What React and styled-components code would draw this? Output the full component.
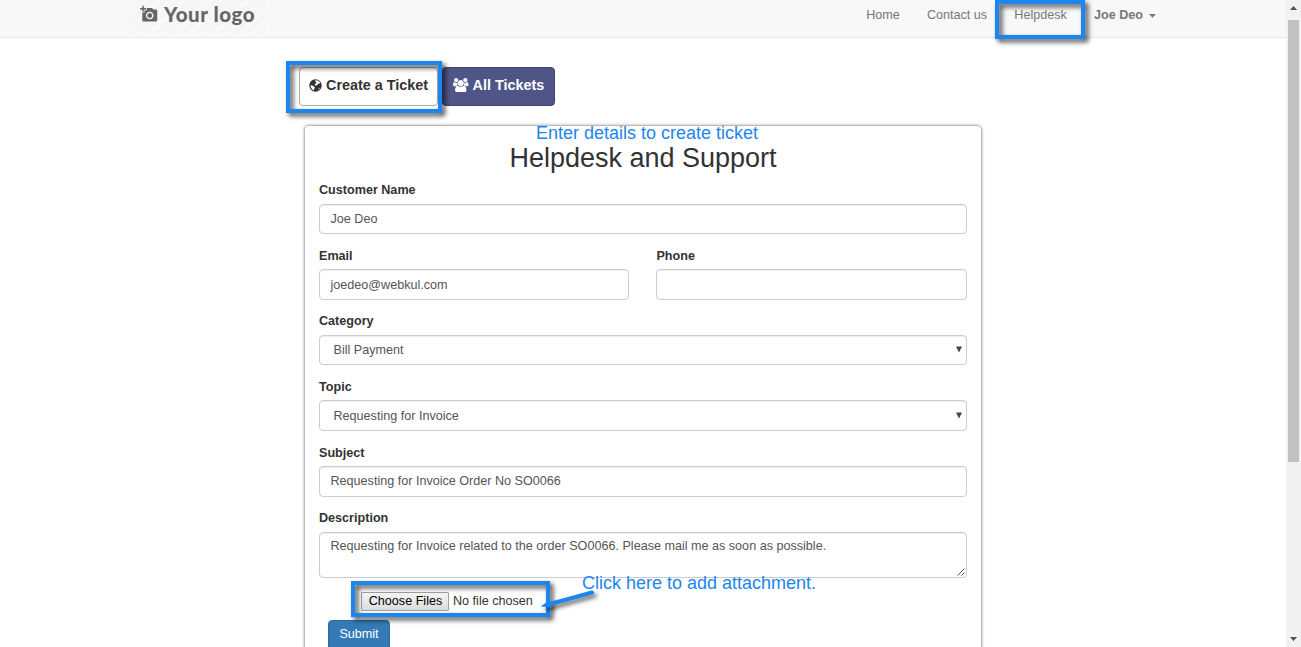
import React from 'react';
import styled, { createGlobalStyle } from 'styled-components';
import { MdAddAPhoto } from 'react-icons/md';

const GlobalStyle = createGlobalStyle`
  * { box-sizing: border-box; }
  html, body { margin: 0; padding: 0; overflow: hidden; }
  body {
    font-family: "Liberation Sans", Arial, sans-serif;
    font-size: 12.6px;
    line-height: 18px;
    color: #333;
    background: #fff;
  }
`;

const BLUE = '#1c86ee';

const Window = styled.div`
  position: relative;
  display: flex;
  width: 1301px;
  height: 647px;
  overflow: hidden;
`;

const Page = styled.div`
  flex: 1;
  min-width: 0;
  display: flex;
  flex-direction: column;
  overflow: hidden;
`;

const Navbar = styled.header`
  flex: none;
  height: 38px;
  padding: 0 130px;
  display: flex;
  justify-content: space-between;
  align-items: flex-start;
  background: #f8f8f8;
  border-bottom: 1px solid #e7e7e7;
`;

const Brand = styled.a`
  display: flex;
  align-items: center;
  gap: 6.5px;
  width: 135px;
  height: 33px;
  padding: 0 0 5px 9.5px;
  color: #666;
  background: repeating-linear-gradient(135deg, #f8f8f8 0 5px, #f5f5f5 5px 9px);
`;

const BrandName = styled.span`
  font-family: Lato, sans-serif;
  font-size: 20.5px;
  font-weight: 900;
  letter-spacing: 0.55px;
  white-space: nowrap;
`;

const NavLinks = styled.nav`
  display: flex;
  gap: 27.2px;
  padding-top: 6px;
`;

const NavLink = styled.a`
  display: flex;
  align-items: center;
  color: #777;
  font-weight: ${(p) => (p.$bold ? 700 : 400)};
  white-space: nowrap;
`;

const Caret = styled.svg`
  width: 7px;
  height: 4px;
  margin-left: 6px;
  margin-top: 1px;
  fill: #777;
`;

const Main = styled.main`
  width: 678px;
  margin-left: 304px;
  display: flex;
  flex-direction: column;
`;

const Tabs = styled.div`
  display: flex;
  gap: 4px;
  margin: 29px 0 19px -5px;
`;

const Tab = styled.button`
  display: flex;
  align-items: center;
  gap: 4px;
  width: ${(p) => p.$width}px;
  height: 39px;
  padding: 0 0 3px ${(p) => (p.$dark ? 10 : 9)}px;
  border: 1px solid ${(p) => (p.$dark ? '#3f4475' : '#aaa')};
  border-radius: 4px;
  background: ${(p) => (p.$dark ? '#505587' : '#fff')};
  color: ${(p) => (p.$dark ? '#fff' : '#333')};
  font: 700 14.4px/20px "Liberation Sans", Arial, sans-serif;
  white-space: nowrap;
`;

const Card = styled.section`
  height: 560px;
  padding: 17px 14px 0;
  border: 1px solid #bbb;
  border-radius: 5px;
  box-shadow: 0 0 3px rgba(0, 0, 0, 0.35);
`;

const Title = styled.h1`
  margin: 0 0 9.15px;
  font-size: 27px;
  font-weight: 400;
  line-height: 30px;
  text-align: center;
`;

const FormRow = styled.div`
  display: grid;
  grid-template-columns: 310px 310.6px;
  justify-content: space-between;
`;

const Group = styled.div`
  height: 65.6px;
`;

const Label = styled.label`
  display: block;
  height: 17px;
  margin-bottom: 4.5px;
  font-weight: 700;
  line-height: 17px;
`;

const Control = styled.div`
  display: flex;
  justify-content: space-between;
  align-items: flex-start;
  height: ${(p) => (p.$tall ? 46 : 30.6)}px;
  padding: 5.3px ${(p) => (p.$select ? '3px 0 13.5px' : '10px 0 10.5px')};
  border: 1px solid #ccc;
  border-radius: 4px;
  background: #fff;
  box-shadow: inset 0 1px 1px rgba(0, 0, 0, 0.075);
  color: #555;
  ${(p) => p.$tall && 'padding: 4.2px 0 0 10.5px;'}
`;

const SelectArrow = styled.svg`
  flex: none;
  width: 8px;
  height: 7px;
  margin-top: 5px;
`;

const ResizeGrip = styled.svg`
  align-self: flex-end;
  width: 9px;
  height: 9px;
`;

const Attachment = styled.div`
  display: flex;
  align-items: center;
  gap: 4px;
  margin: 16.25px 0 9px 42px;
  height: 19px;
`;

const FileButton = styled.button`
  width: 88px;
  height: 19px;
  padding: 0 0 0 1px;
  border: 1px solid #a0a0a0;
  border-radius: 1px;
  background: linear-gradient(#f4f4f4, #dcdcdc);
  color: #000;
  font: 12.6px/15px "Liberation Sans", Arial, sans-serif;
  white-space: nowrap;
`;

const Submit = styled.button`
  display: block;
  width: 62px;
  height: 31px;
  margin-left: 9px;
  padding: 0 0 3px;
  border: 1px solid #2e6da4;
  border-radius: 4px;
  background: #337ab7;
  color: #fff;
  font: 12.6px/18px "Liberation Sans", Arial, sans-serif;
`;

const Scrollbar = styled.aside`
  flex: none;
  width: 15px;
  display: flex;
  flex-direction: column;
  align-items: center;
  background: #f1f1f1;
`;

const ScrollButton = styled.svg`
  width: 15px;
  height: 20px;
`;

const ScrollThumb = styled.div`
  width: 11px;
  height: 442px;
  margin-bottom: auto;
  background: #c1c1c1;
`;

const Highlight = styled.div`
  position: absolute;
  left: ${(p) => p.$x}px;
  top: ${(p) => p.$y}px;
  width: ${(p) => p.$w}px;
  height: ${(p) => p.$h}px;
  border: 4px solid ${BLUE};
  filter: drop-shadow(3px 3px 2.5px rgba(0, 0, 0, 0.75));
  pointer-events: none;
`;

const Note = styled.div`
  position: absolute;
  left: ${(p) => p.$x}px;
  top: ${(p) => p.$y}px;
  color: ${BLUE};
  font-size: 18px;
  line-height: 20px;
  white-space: nowrap;
`;

const Pointer = styled.svg`
  position: absolute;
  left: 536px;
  top: 586px;
  width: 66px;
  height: 28px;
  filter: drop-shadow(3px 3px 2px rgba(0, 0, 0, 0.6));
`;

const GlobeIcon = () => (
  <svg width="13" height="13" viewBox="0 0 13 13">
    <circle cx="6.5" cy="6.5" r="6.2" fill="#333" />
    <path
      d="M6.2 1.3 8.6 1.4 10.6 2.8 11.3 4.2 10 4.5 8.8 5.2 7.6 6.6 6.2 6.4 5.6 5.4 6.8 4.4 7.4 3.2 6.4 2.6ZM1.6 6.2 3 6.6 4.6 7.2 6 8.4 5.4 9.6 5 11.3 3.4 10.6 2.2 9.2 1.6 7.8ZM9 11 9.8 9.6 11 8.6 10.4 9.9Z"
      fill="#fff"
    />
  </svg>
);

const UsersIcon = () => (
  <svg width="15.5" height="14.4" viewBox="0 0 1920 1792" fill="#fff">
    <path d="M593 896q-162 5-265 128h-134q-82 0-138-40.5t-56-118.5q0-353 124-353 6 0 43.5 21t97.5 42.5 119 21.5q67 0 133-23-5 37-5 66 0 139 81 256zm1071 637q0 120-73 189.5t-194 69.5h-874q-121 0-194-69.5t-73-189.5q0-53 3.5-103.5t14-109 26.5-108.5 43-97.5 62-81 85.5-53.5 111.5-20q10 0 43 21.5t73 48 107 48 135 21.5 135-21.5 107-48 73-48 43-21.5q61 0 111.5 20t85.5 53.5 62 81 43 97.5 26.5 108.5 14 109 3.5 103.5zm-1024-1277q0 106-75 181t-181 75-181-75-75-181 75-181 181-75 181 75 75 181zm704 384q0 159-112.5 271.5t-271.5 112.5-271.5-112.5-112.5-271.5 112.5-271.5 271.5-112.5 271.5 112.5 112.5 271.5zm576 225q0 78-56 118.5t-138 40.5h-134q-103-123-265-128 81-117 81-256 0-29-5-66 66 23 133 23 59 0 119-21.5t97.5-42.5 43.5-21q124 0 124 353zm-128-609q0 106-75 181t-181 75-181-75-75-181 75-181 181-75 181 75 75 181z" />
  </svg>
);

const Field = ({ label, value, select, tall }) => (
  <Group>
    <Label>{label}</Label>
    <Control $select={select} $tall={tall}>
      <span>{value}</span>
      {select && (
        <SelectArrow viewBox="0 0 8 7">
          <path d="M1 0.5H7L4 6.5Z" fill="#444" />
        </SelectArrow>
      )}
      {tall && (
        <ResizeGrip viewBox="0 0 9 9">
          <path d="M0.5 7.5 7.5 0.5M4.5 7.5 7.5 4.5" stroke="#555" fill="none" />
        </ResizeGrip>
      )}
    </Control>
  </Group>
);

export default function App() {
  return (
    <Window>
      <GlobalStyle />
      <Page>
        <Navbar>
          <Brand>
            <MdAddAPhoto size={18} />
            <BrandName>Your logo</BrandName>
          </Brand>
          <NavLinks>
            <NavLink>Home</NavLink>
            <NavLink>Contact us</NavLink>
            <NavLink>Helpdesk</NavLink>
            <NavLink $bold>
              Joe Deo
              <Caret viewBox="0 0 7 4">
                <path d="M0 0H7L3.5 3.8Z" />
              </Caret>
            </NavLink>
          </NavLinks>
        </Navbar>
        <Main>
          <Tabs>
            <Tab $width={139}>
              <GlobeIcon />
              Create a Ticket
            </Tab>
            <Tab $dark $width={113}>
              <UsersIcon />
              All Tickets
            </Tab>
          </Tabs>
          <Card>
            <Title>Helpdesk and Support</Title>
            <Field label="Customer Name" value="Joe Deo" />
            <FormRow>
              <Field label="Email" value="joedeo@webkul.com" />
              <Field label="Phone" value="" />
            </FormRow>
            <Field label="Category" value="Bill Payment" select />
            <Field label="Topic" value="Requesting for Invoice" select />
            <Field label="Subject" value="Requesting for Invoice Order No SO0066" />
            <Field
              label="Description"
              value="Requesting for Invoice related to the order SO0066. Please mail me as soon as possible."
              tall
            />
            <Attachment>
              <FileButton>Choose Files</FileButton>
              <span>No file chosen</span>
            </Attachment>
            <Submit>Submit</Submit>
          </Card>
        </Main>
      </Page>
      <Scrollbar>
        <ScrollButton viewBox="0 0 15 20">
          <path d="M4 10H11L7.5 6Z" fill="#505050" />
        </ScrollButton>
        <ScrollThumb />
        <ScrollButton viewBox="0 0 15 20">
          <path d="M4 10H11L7.5 14Z" fill="#505050" />
        </ScrollButton>
      </Scrollbar>
      <Highlight $x={995} $y={0} $w={90} $h={39} />
      <Highlight $x={286} $y={61} $w={156} $h={52} />
      <Highlight $x={351} $y={581} $w={199} $h={36} />
      <Pointer viewBox="0 0 66 28">
        <path d="M14 18 56 6.5" stroke={BLUE} strokeWidth="4" strokeLinecap="round" />
        <path d="M4.5 20.5 13 14.5 16 21.5Z" fill={BLUE} />
      </Pointer>
      <Note $x={536} $y={123}>Enter details to create ticket</Note>
      <Note $x={582} $y={573}>Click here to add attachment.</Note>
    </Window>
  );
}
